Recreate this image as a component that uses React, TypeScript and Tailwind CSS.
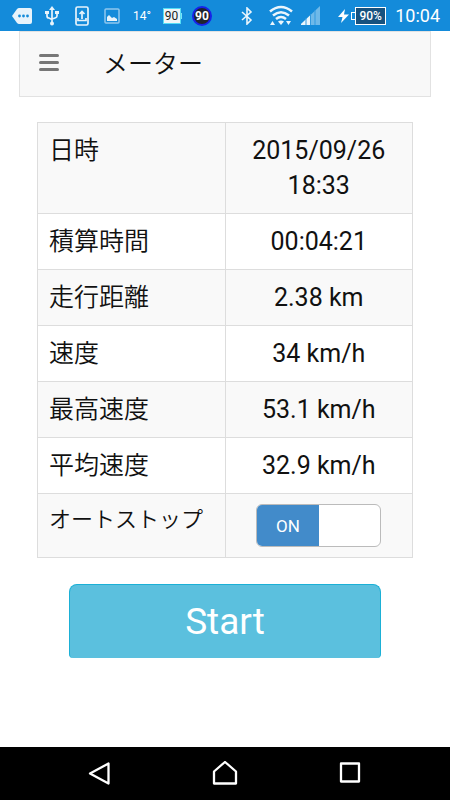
import { useState } from "react";

const rows = [
  { label: "日時", value: "2015/09/26 18:33" },
  { label: "積算時間", value: "00:04:21" },
  { label: "走行距離", value: "2.38 km" },
  { label: "速度", value: "34 km/h" },
  { label: "最高速度", value: "53.1 km/h" },
  { label: "平均速度", value: "32.9 km/h" },
];

function StatusBar() {
  return (
    <header className="flex h-[31px] items-center justify-between bg-[#148bda] pr-2.5 pl-[7px] text-white">
      <div className="flex items-center">
        <span className="flex w-[30px] justify-center">
          <svg width="22" height="18" viewBox="0 0 22 18">
            <path d="M1 9 6 2q1-1 2-1h11q2 0 2 2v12q0 2-2 2H8q-1 0-2-1Z" fill="#e7f3fb" />
            <g fill="#148bda">
              <circle cx="8.500" cy="9" r="1.400" />
              <circle cx="12.500" cy="9" r="1.400" />
              <circle cx="16.500" cy="9" r="1.400" />
            </g>
          </svg>
        </span>
        <span className="flex w-[30px] justify-center">
          <svg width="14" height="20" viewBox="0 0 14 20" fill="none" stroke="#e7f3fb" strokeWidth="1.700">
            <path d="M7 3v14M2 7v3q0 2 2 2l3 1.500M12 7v3q0 1.500-2 2l-3 1" />
            <path d="M7 0 10 4H4ZM0 5h4v3H0ZM10 5h4v3h-4Z" fill="#e7f3fb" stroke="none" />
            <circle cx="7" cy="17.500" r="2" fill="#e7f3fb" stroke="none" />
          </svg>
        </span>
        <span className="flex w-[30px] justify-center">
          <svg width="14" height="20" viewBox="0 0 14 20" fill="none" stroke="#e7f3fb">
            <rect x="1" y="1" width="12" height="18" rx="1.500" strokeWidth="1.700" />
            <path d="M7 13V6M4.500 8 7 5.500 9.500 8M3 12v2.500h8V12" strokeWidth="1.700" />
          </svg>
        </span>
        <span className="flex w-[30px] justify-center">
          <svg width="16" height="16" viewBox="0 0 16 16">
            <rect x="1" y="1" width="14" height="14" rx="1" fill="none" stroke="#8fc7ee" strokeWidth="1.500" />
            <path d="M3 13V9l2-2 3 3 2-1 3 2v2Z" fill="#e7f3fb" />
          </svg>
        </span>
        <span className="flex h-5 w-[30px] items-center justify-center text-[12px] leading-5">14°</span>
        <span className="flex w-[30px] items-center justify-center">
          <span className="flex h-4 w-[18px] items-center justify-center border border-[#55ddf5] bg-[#eef5f8] text-[12px] leading-3 text-[#222]">
            90
          </span>
          <span className="h-1.5 w-px bg-[#7be4f7]" />
        </span>
        <span className="flex w-[30px] justify-center">
          <span className="flex size-5 items-center justify-center rounded-full border-2 border-[#1722e8] bg-[#20242c] text-[12px] leading-4 font-bold">
            90
          </span>
        </span>
      </div>
      <div className="flex items-center">
        <svg width="12" height="18" viewBox="0 0 12 18" fill="none" stroke="#eaf5fc" strokeWidth="1.600">
          <path d="m1 5 9 8-4 4V1l4 4-9 8" />
        </svg>
        <svg className="ml-4" width="24" height="22" viewBox="0 0 24 22">
          <g fill="none" stroke="#eaf5fc" strokeWidth="2.600">
            <path d="M1 6.500Q12-2.500 23 6.500" />
            <path d="M4 10.500Q12 4 20 10.500" />
            <path d="M7 14Q12 10 17 14" />
          </g>
          <path d="m9 16.500q3-2 6 0L12 20Z" fill="#eaf5fc" />
          <path d="m1 20 2.500-4L6 20ZM17 16h5l-2.500 4Z" fill="#eaf5fc" />
        </svg>
        <svg className="ml-2" width="19" height="19" viewBox="0 0 19 19">
          <path d="M0 19v-1L19 0v19Z" fill="#6fb9e9" />
          <path d="M0 19v-1l9-8.500V19Z" fill="#eaf5fc" />
          <path d="M5 12v7M9.500 8v11M14 4v15" stroke="#3299df" strokeWidth="1" />
        </svg>
        <svg className="ml-[18px]" width="11" height="16" viewBox="0 0 11 16">
          <path d="M7 1 0 9h4.500L3 15l8-8.500H6Z" fill="#fff" />
        </svg>
        <span className="ml-0.5 h-2 w-1 border border-r-0 border-white" />
        <span className="flex h-[18px] w-[31px] items-center justify-center border border-white bg-[#17527f] text-[12px] leading-4 font-medium">
          90%
        </span>
        <span className="ml-[9px] text-[18px] leading-6">10:04</span>
      </div>
    </header>
  );
}

function NavigationBar() {
  return (
    <footer className="mt-auto grid h-[53px] grid-cols-3 bg-black px-[37px] text-white">
      <button type="button" aria-label="Back" className="flex items-center justify-center">
        <svg width="24" height="26" viewBox="0 0 24 26" fill="none" stroke="currentColor" strokeWidth="2.300" strokeLinejoin="round">
          <path d="M20.500 2.500v20L2 12.500Z" />
        </svg>
      </button>
      <button type="button" aria-label="Home" className="flex items-center justify-center">
        <svg width="26" height="26" viewBox="0 0 26 26" fill="none" stroke="currentColor" strokeWidth="2.300" strokeLinejoin="round">
          <path d="M2 10.500 13 1l11 9.500V22.500H2Z" />
        </svg>
      </button>
      <button type="button" aria-label="Recent apps" className="flex items-center justify-center">
        <svg width="22" height="24" viewBox="0 0 22 24" fill="none" stroke="currentColor" strokeWidth="2.300" strokeLinejoin="round">
          <rect x="2" y="1.500" width="18" height="18" />
        </svg>
      </button>
    </footer>
  );
}

export default function App() {
  const [autoStop, setAutoStop] = useState(true);
  return (
    <div className="flex min-h-screen flex-col bg-white font-[Roboto,'Noto_Sans_CJK_JP',sans-serif] text-[#111]">
      <StatusBar />
      <nav className="mx-[19px] flex h-[66px] items-center border border-[#e2e2e2] bg-[#f8f8f8] pb-1 pl-[19px]">
        <button type="button" aria-label="Menu" className="flex w-5 flex-col gap-1">
          <span className="h-[3px] rounded-xs bg-[#777]" />
          <span className="h-[3px] rounded-xs bg-[#777]" />
          <span className="h-[3px] rounded-xs bg-[#777]" />
        </button>
        <h1 className="ml-11 font-['Noto_Sans_CJK_JP',sans-serif] text-[25px] leading-9 font-[350]">メーター</h1>
      </nav>
      <main className="mx-[37px] mt-[25px]">
        <table className="w-full table-fixed border-collapse text-[25px] leading-[35px]">
          <tbody>
            {rows.map((row) => (
              <tr key={row.label} className="odd:bg-[#f9f9f9]">
                <th scope="row" className="border border-[#ddd] px-[11px] py-2.5 text-left align-top font-[350]">
                  {row.label}
                </th>
                <td className="border border-[#ddd] p-2.5 text-center align-top">{row.value}</td>
              </tr>
            ))}
            <tr className="odd:bg-[#f9f9f9]">
              <th scope="row" className="border border-[#ddd] px-[11px] py-2 text-left align-top text-[22px] font-[350] whitespace-nowrap">
                <label htmlFor="auto-stop">オートストップ</label>
              </th>
              <td className="border border-[#ddd] p-2.5">
                <label className="relative mx-auto flex h-[43px] w-[125px] overflow-hidden rounded-md border border-[#bbb] bg-white">
                  <input
                    id="auto-stop"
                    type="checkbox"
                    className="sr-only"
                    checked={autoStop}
                    onChange={(e) => setAutoStop(e.target.checked)}
                  />
                  {autoStop ? (
                    <span className="flex w-1/2 items-center justify-center bg-[#428bca] text-[17px] leading-6 text-white">ON</span>
                  ) : (
                    <span className="ml-auto flex w-1/2 items-center justify-center bg-[#eee] text-[17px] leading-6">OFF</span>
                  )}
                </label>
              </td>
            </tr>
          </tbody>
        </table>
        <button
          type="button"
          className="mx-8 mt-[26px] flex h-[74px] w-[calc(100%-64px)] items-center justify-center rounded-t-lg rounded-b-sm border border-b-0 border-[#1bb0d6] bg-[#5bc0de] text-[37px] leading-none text-white"
        >
          Start
        </button>
      </main>
      <NavigationBar />
    </div>
  );
}
